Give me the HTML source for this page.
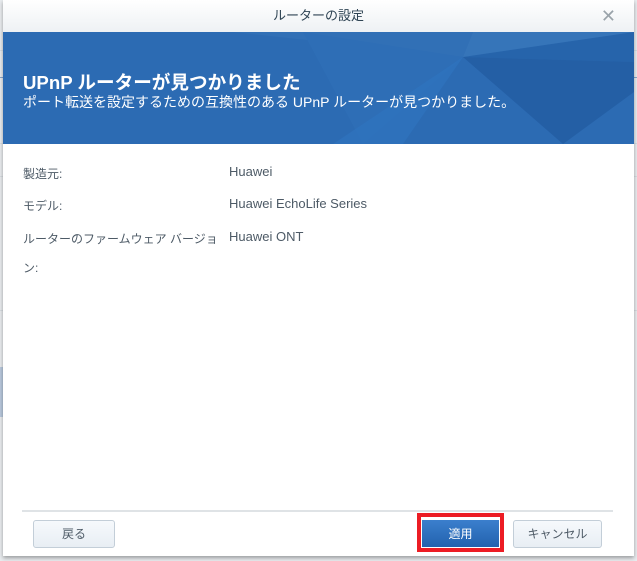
<!DOCTYPE html>
<html><head><meta charset="utf-8">
<style>
*{margin:0;padding:0;box-sizing:border-box}
body{width:637px;height:561px;overflow:hidden;background:#e9ecef;font-family:"Liberation Sans","Noto Sans CJK JP",sans-serif;position:relative}
.bgline{position:absolute;left:0;right:0;height:1px;background:#d8dde2}
.dlg{position:absolute;left:3px;top:0;width:631px;height:556px;background:#fff;box-shadow:0 2px 4px rgba(0,0,0,.35)}
.hdr{height:32px;background:linear-gradient(#ffffff,#eef1f4);text-align:center;line-height:32px;font-size:13px;color:#2f4454;position:relative}
.x{position:absolute;right:18px;top:0;font-size:18px;color:#9aa3aa;font-weight:normal}
.ban{position:absolute;left:0;top:32px;width:631px;height:112px;background:#2c6bb3;overflow:hidden}
.ban h1{position:absolute;left:20px;top:36px;font-size:18.6px;color:#fff;font-weight:bold}
.ban p{position:absolute;left:20px;top:60px;font-size:14px;color:#fff}
.row{position:absolute;font-size:12px;color:#4d5a66}
.val{font-size:13px;margin-top:-1px}
.line{position:absolute;left:19px;width:591px;top:510px;height:2px;background:#dfe3e6}
.btn{position:absolute;top:520px;height:28px;border:1px solid #c3ced8;border-radius:3px;background:linear-gradient(#f6f9fc,#e8eef4);font-size:12px;color:#4d5a66;text-align:center;line-height:26px}
</style></head><body>
<div class="bgline" style="top:50px"></div>
<div class="bgline" style="top:77px;background:#8aa4c6"></div>
<div class="bgline" style="top:143px"></div>
<div class="bgline" style="top:176px"></div>
<div class="bgline" style="top:310px"></div>
<div style="position:absolute;left:0;top:367px;width:3px;height:50px;background:#b9c9dd"></div>
<div class="dlg">
<div class="hdr">ルーターの設定<span class="x">✕</span></div>
<div class="ban">
<svg width="631" height="112" style="position:absolute;left:0;top:0">
<polygon points="230,0 470,0 460,25" fill="#3170b6"/>
<polygon points="460,25 631,0 631,30" fill="#2664ab"/>
<polygon points="300,0 460,25 360,112" fill="#2e6eb6"/>
<polygon points="460,25 400,112 330,112" fill="#2f74bf" opacity=".7"/>
<polygon points="460,25 560,112 631,60 631,30" fill="#245fa5"/>
<polygon points="470,0 631,0 460,25" fill="#3e7cbd" opacity=".6"/>
</svg>
<h1>UPnP ルーターが見つかりました</h1>
<p>ポート転送を設定するための互換性のある UPnP ルーターが見つかりました。</p>
</div>
<div class="row" style="left:20px;top:165px">製造元:</div>
<div class="row val" style="left:226px;top:165px">Huawei</div>
<div class="row" style="left:20px;top:197px">モデル:</div>
<div class="row val" style="left:226px;top:197px">Huawei EchoLife Series</div>
<div class="row" style="left:20px;top:230px">ルーターのファームウェア バージョ</div>
<div class="row" style="left:20px;top:259px">ン:</div>
<div class="row val" style="left:226px;top:230px">Huawei ONT</div>
<div class="line"></div>
<div class="btn" style="left:30px;width:82px">戻る</div>
<div style="position:absolute;left:414px;top:513px;width:87px;height:39px;border:4px solid #ec1c24;background:#fff">
<div style="position:absolute;left:1px;top:1px;width:77px;height:29px;background:linear-gradient(#3b7fcd,#2262ae);border-top:2px solid #fff;color:#fff;font-size:12px;text-align:center;line-height:28px">適用</div>
</div>
<div class="btn" style="left:510px;width:89px">キャンセル</div>
</div>
</body></html>
